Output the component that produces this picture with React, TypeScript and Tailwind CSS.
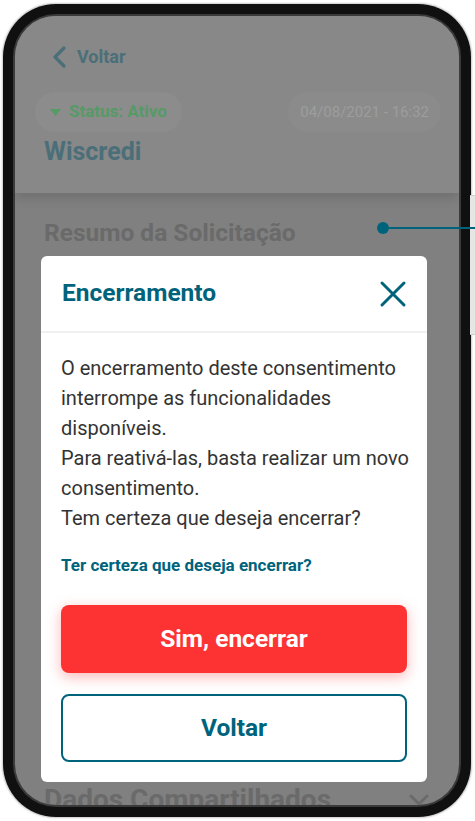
import React from 'react';

const font = { fontFamily: 'Roboto, "Noto Sans", sans-serif' };

const CloseIcon = () => (
  <svg width="28" height="28" viewBox="0 0 28 28" fill="none">
    <path d="M3 3L25 25M25 3L3 25" stroke="#00637c" strokeWidth="3" strokeLinecap="round" />
  </svg>
);

const BackHeader = () => (
  <div className="bg-[#888888] h-[177px] flex flex-col relative shadow-[0_6px_10px_rgba(0,0,0,0.12)]">
    <div className="flex items-center gap-[10px] pl-[36px] pt-[27px]">
      <svg width="16" height="24" viewBox="0 0 16 24" fill="none">
        <path d="M13 3L4 12L13 21" stroke="#4b6f79" strokeWidth="3.2" strokeLinecap="round" strokeLinejoin="round" />
      </svg>
      <span className="text-[18px] font-bold text-[#4b6f79]">Voltar</span>
    </div>
    <div className="flex items-center justify-between pl-[20px] pr-[18px] mt-[22px]">
      <div className="flex items-center gap-[8px] rounded-full bg-[#8c8c8c] px-[15px] h-[40px]">
        <svg width="11" height="7" viewBox="0 0 11 7">
          <path d="M0 0H11L5.5 7Z" fill="#569a66" />
        </svg>
        <span className="text-[17px] font-bold text-[#569a66]">Status: Ativo</span>
      </div>
      <div className="rounded-full bg-[#8b8b8b] px-[12px] h-[40px] flex items-center">
        <span className="text-[15px] text-[#9d9d9d]">04/08/2021 - 16:32</span>
      </div>
    </div>
    <div className="pl-[29px] mt-[1px]">
      <span className="text-[25px] font-bold text-[#4b6f79]">Wiscredi</span>
    </div>
  </div>
);

const Modal = () => (
  <div className="absolute left-[26px] top-[240px] w-[386px] bg-white rounded-[6px] flex flex-col">
    <div className="h-[77px] flex items-center justify-between pl-[21px] pr-[20px] border-b-2 border-[#f0f0f0]">
      <span className="text-[24.5px] font-bold text-[#00637c]">Encerramento</span>
      <CloseIcon />
    </div>
    <div className="flex flex-col px-[20px] pt-[20px] pb-[20px]">
      <p className="-mr-[12px] text-[20px] leading-[30px] text-[#333333]">
        O encerramento deste consentimento interrompe as funcionalidades disponíveis.
        <br />
        Para reativá-las, basta realizar um novo consentimento.
        <br />
        Tem certeza que deseja encerrar?
      </p>
      <p className="mt-[21px] text-[17px] leading-[22px] font-bold text-[#00637c]">
        Ter certeza que deseja encerrar?
      </p>
      <button className="mt-[29px] h-[68px] rounded-[8px] bg-[#fd3333] text-white text-[24.5px] font-bold shadow-[0_4px_14px_rgba(253,51,51,0.35)]">
        Sim, encerrar
      </button>
      <button className="mt-[21px] h-[68px] rounded-[8px] border-2 border-[#00637c] bg-white text-[#00637c] text-[24.5px] font-bold">
        Voltar
      </button>
    </div>
  </div>
);

export default function App() {
  return (
    <div className="w-[475px] h-[821px] bg-white relative overflow-hidden" style={font}>
      <div className="absolute right-0 top-[195px] w-[5px] h-[140px] bg-[#e6e6e6] border-y border-[#cfcfcf]" />
      <div className="ml-[2px] mt-[3px] w-[470px] h-[815px] rounded-[54px] bg-[#d8d8d8] p-[1px] shadow-[0_0_2px_rgba(0,0,0,0.2)]">
        <div className="h-full rounded-[53px] bg-[#101010] p-[10px]">
          <div className="h-full rounded-[43px] bg-[#3a3a3a] p-[2px]">
            <div className="h-full rounded-[41px] bg-[#808080] overflow-hidden relative flex flex-col">
              <BackHeader />
              <div className="pl-[29px] pt-[22px]">
                <span className="text-[24.5px] font-bold text-[#6a6a6a]">Resumo da Solicitação</span>
              </div>
              <div className="mt-auto flex items-center justify-between pl-[29px] pr-[30px] -mb-[16px]">
                <span className="text-[28px] font-bold text-[#6a6a6a]">Dados Compartilhados</span>
                <svg width="20" height="12" viewBox="0 0 20 12" fill="none">
                  <path d="M2 2L10 10L18 2" stroke="#6a6a6a" strokeWidth="3" strokeLinecap="round" />
                </svg>
              </div>
              <Modal />
            </div>
          </div>
        </div>
      </div>
      <div className="absolute left-[377px] top-[222px] w-[12px] h-[12px] rounded-full bg-[#00637c]" />
      <div className="absolute left-[383px] top-[227px] w-[92px] h-[2px] bg-[#00637c]" />
    </div>
  );
}
